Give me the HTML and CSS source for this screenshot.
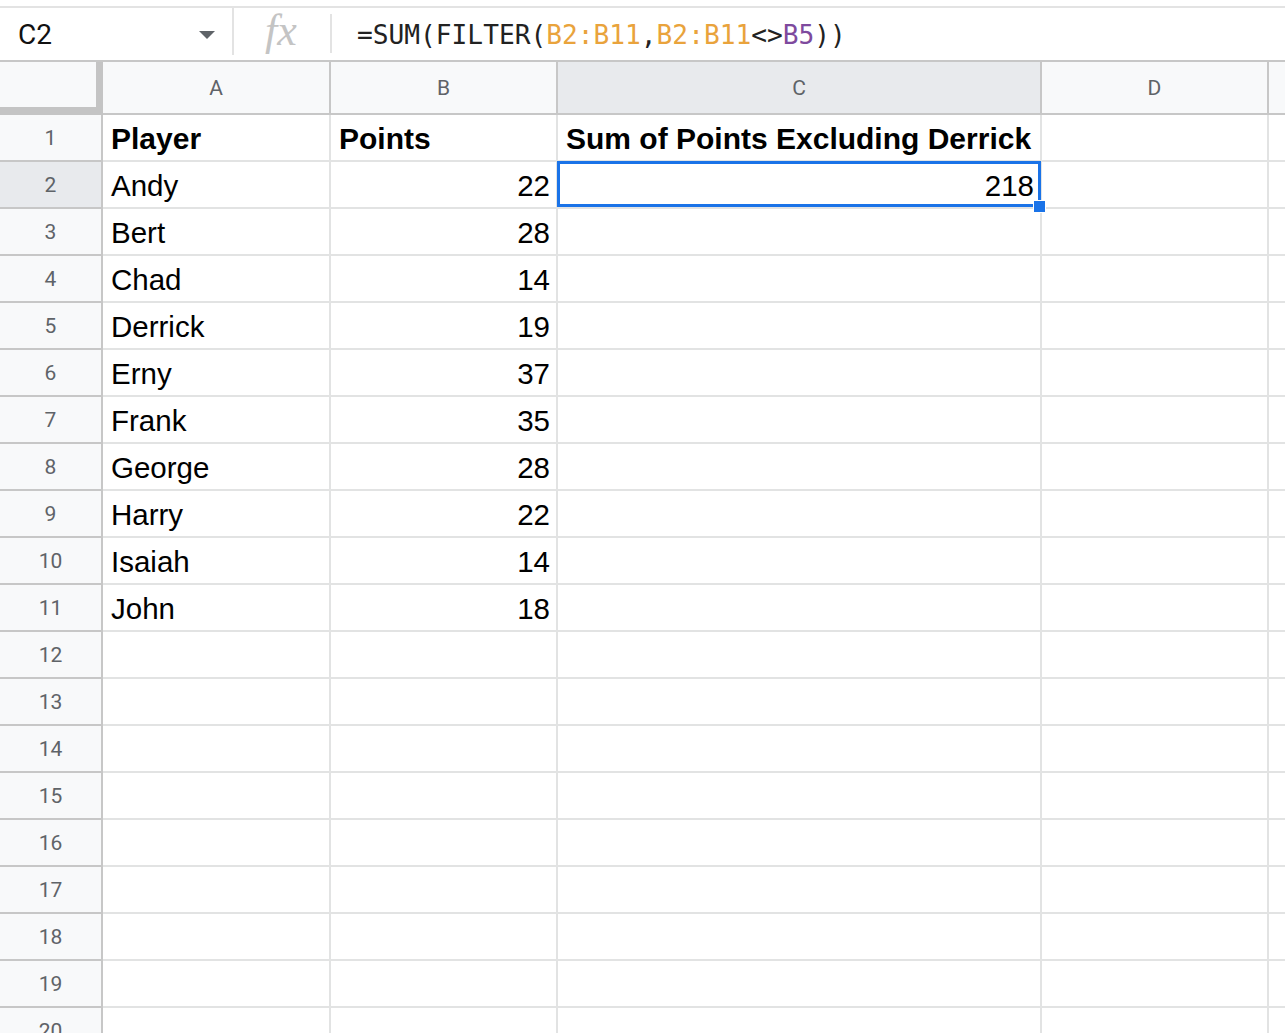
FILE: index.html
```html
<!DOCTYPE html>
<html>
<head>
<meta charset="utf-8">
<link rel="stylesheet" href="styles.css">
</head>
<body>
<div class="top"></div>
<div class="fbar">
  <div class="namebox"><span class="ref">C2</span><span class="caret"></span></div>
  <div class="fx"><span>fx</span></div>
  <div class="formula">=SUM(FILTER(<span class="o">B2:B11</span>,<span class="o">B2:B11</span>&lt;&gt;<span class="p">B5</span>))</div>
</div>
<div class="grid">
  <div class="corner"></div><div class="ch">A</div><div class="ch">B</div><div class="ch sel-col">C</div><div class="ch">D</div><div class="ch last"></div>

  <div class="rh">1</div><div class="c b">Player</div><div class="c b">Points</div><div class="c b">Sum of Points Excluding Derrick</div><div class="c"></div><div class="c last"></div>
  <div class="rh sel-row">2</div><div class="c">Andy</div><div class="c num">22</div><div class="c num sel">218</div><div class="c"></div><div class="c last"></div>
  <div class="rh">3</div><div class="c">Bert</div><div class="c num">28</div><div class="c"></div><div class="c"></div><div class="c last"></div>
  <div class="rh">4</div><div class="c">Chad</div><div class="c num">14</div><div class="c"></div><div class="c"></div><div class="c last"></div>
  <div class="rh">5</div><div class="c">Derrick</div><div class="c num">19</div><div class="c"></div><div class="c"></div><div class="c last"></div>
  <div class="rh">6</div><div class="c">Erny</div><div class="c num">37</div><div class="c"></div><div class="c"></div><div class="c last"></div>
  <div class="rh">7</div><div class="c">Frank</div><div class="c num">35</div><div class="c"></div><div class="c"></div><div class="c last"></div>
  <div class="rh">8</div><div class="c">George</div><div class="c num">28</div><div class="c"></div><div class="c"></div><div class="c last"></div>
  <div class="rh">9</div><div class="c">Harry</div><div class="c num">22</div><div class="c"></div><div class="c"></div><div class="c last"></div>
  <div class="rh">10</div><div class="c">Isaiah</div><div class="c num">14</div><div class="c"></div><div class="c"></div><div class="c last"></div>
  <div class="rh">11</div><div class="c">John</div><div class="c num">18</div><div class="c"></div><div class="c"></div><div class="c last"></div>
  <div class="rh">12</div><div class="c"></div><div class="c"></div><div class="c"></div><div class="c"></div><div class="c last"></div>
  <div class="rh">13</div><div class="c"></div><div class="c"></div><div class="c"></div><div class="c"></div><div class="c last"></div>
  <div class="rh">14</div><div class="c"></div><div class="c"></div><div class="c"></div><div class="c"></div><div class="c last"></div>
  <div class="rh">15</div><div class="c"></div><div class="c"></div><div class="c"></div><div class="c"></div><div class="c last"></div>
  <div class="rh">16</div><div class="c"></div><div class="c"></div><div class="c"></div><div class="c"></div><div class="c last"></div>
  <div class="rh">17</div><div class="c"></div><div class="c"></div><div class="c"></div><div class="c"></div><div class="c last"></div>
  <div class="rh">18</div><div class="c"></div><div class="c"></div><div class="c"></div><div class="c"></div><div class="c last"></div>
  <div class="rh">19</div><div class="c"></div><div class="c"></div><div class="c"></div><div class="c"></div><div class="c last"></div>
  <div class="rh">20</div><div class="c"></div><div class="c"></div><div class="c"></div><div class="c"></div><div class="c last"></div>
</div>
</body>
</html>
```

FILE: styles.css
```css
html, body {
  margin: 0;
  padding: 0;
  background: #ffffff;
}
body {
  width: 1285px;
  height: 1033px;
  overflow: hidden;
  font-family: "Liberation Sans", Arial, sans-serif;
  color: #000;
}
.top {
  height: 6px;
  border-bottom: 2px solid #e3e3e3;
}
.fbar {
  display: flex;
  height: 52px;
  border-bottom: 2px solid #c7c7c7;
}
.namebox {
  width: 234px;
  box-sizing: border-box;
  display: flex;
  align-items: center;
  padding-left: 18px;
  padding-right: 17px;
  border-right: 2px solid #e3e3e3;
  margin-bottom: 5px;
}
.ref {
  font-family: Roboto, "Liberation Sans", sans-serif;
  font-size: 28px;
  color: #111;
  flex: 1;
  margin-top: 5px;
}
.caret {
  width: 0;
  height: 0;
  border-left: 8px solid transparent;
  border-right: 8px solid transparent;
  border-top: 8px solid #5f6368;
  margin-top: 6px;
}
.fx {
  width: 98px;
  box-sizing: border-box;
  border-right: 2px solid #e3e3e3;
  margin: 6px 0 7px;
  display: flex;
  align-items: center;
  justify-content: center;
}
.fx span {
  font-family: "Liberation Serif", "DejaVu Serif", serif;
  font-style: italic;
  font-size: 44px;
  color: #c4c4c4;
  margin-top: -6px;
  margin-left: -2px;
}
.formula {
  display: flex;
  align-items: center;
  padding-left: 25px;
  font-family: "DejaVu Sans Mono", "Liberation Mono", monospace;
  font-size: 26.2px;
  color: #222;
  white-space: pre;
  padding-top: 2px;
}
.formula .o { color: #e9a33c; }
.formula .p { color: #7e4a9e; }

.grid {
  display: grid;
  grid-template-columns: 103px 228px 227px 484px 227px 16px;
  grid-template-rows: 53px repeat(20, 47px);
}
.corner {
  background: #f8f9fa;
  border-right: 7px solid #c4c4c4;
  border-bottom: 8px solid #c4c4c4;
}
.ch {
  background: #f8f9fa;
  border-right: 2px solid #c7c7c7;
  border-bottom: 2px solid #c7c7c7;
  display: flex;
  align-items: center;
  justify-content: center;
  font-family: Roboto, "Liberation Sans", sans-serif;
  font-size: 21px;
  color: #5f6368;
}
.ch.sel-col { background: #e8eaed; }
.ch.last { border-right: none; }
.rh {
  background: #f8f9fa;
  border-right: 2px solid #c7c7c7;
  border-bottom: 2px solid #c7c7c7;
  display: flex;
  align-items: center;
  justify-content: center;
  font-family: Roboto, "Liberation Sans", sans-serif;
  font-size: 21px;
  color: #5f6368;
}
.rh.sel-row { background: #e8eaed; }
.c {
  position: relative;
  box-sizing: border-box;
  border-right: 2px solid #e2e3e3;
  border-bottom: 2px solid #e2e3e3;
  display: flex;
  align-items: center;
  padding: 3px 6px 0 8px;
  font-size: 29.5px;
  white-space: nowrap;
}
.c.last { border-right: none; }
.c.b { font-weight: bold; font-size: 30px; }
.c.num { justify-content: flex-end; }
.c.sel::after {
  content: "";
  position: absolute;
  top: -1px;
  left: -1px;
  right: -1px;
  bottom: 0;
  border: 3px solid #1a73e8;
}
.c.sel::before {
  content: "";
  position: absolute;
  right: -6px;
  bottom: -6px;
  width: 11px;
  height: 11px;
  background: #1a73e8;
  border: 1px solid #ffffff;
  z-index: 2;
}
```
